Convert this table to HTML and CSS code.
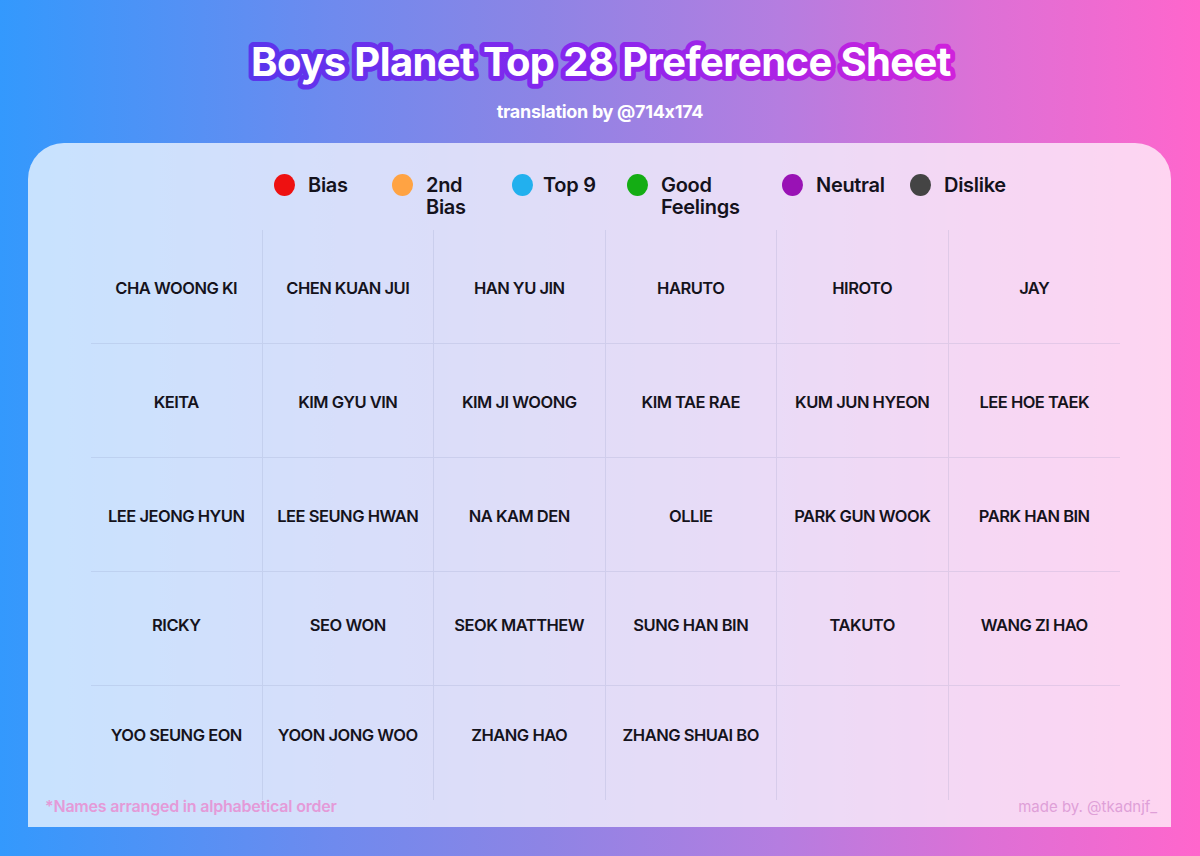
FILE: index.html
```html
<!DOCTYPE html>
<html lang="en">
<head>
<meta charset="utf-8">
<title>Boys Planet Top 28 Preference Sheet</title>
<link rel="stylesheet" href="styles.css">
</head>
<body>
<div class="page">
  <header class="header">
    <h1 class="title">
      <svg class="title-svg" width="1200" height="64" viewBox="0 0 1200 64" aria-label="Boys Planet Top 28 Preference Sheet">
        <defs>
          <linearGradient id="tg" x1="0" y1="0" x2="1" y2="0">
            <stop offset="0" stop-color="#5a35ec"/>
            <stop offset="0.5" stop-color="#8a25ee"/>
            <stop offset="1" stop-color="#cf22dc"/>
          </linearGradient>
        </defs>
        <text class="title-text" x="601" y="46" text-anchor="middle">Boys Planet Top 28 Preference Sheet</text>
      </svg>
    </h1>
    <p class="subtitle">translation by @714x174</p>
  </header>

  <main class="card">
    <ul class="legend">
      <li class="legend-item"><span class="dot dot-red"></span><span class="legend-label">Bias</span></li>
      <li class="legend-item"><span class="dot dot-orange"></span><span class="legend-label">2nd<br>Bias</span></li>
      <li class="legend-item"><span class="dot dot-blue"></span><span class="legend-label">Top 9</span></li>
      <li class="legend-item"><span class="dot dot-green"></span><span class="legend-label">Good<br>Feelings</span></li>
      <li class="legend-item"><span class="dot dot-purple"></span><span class="legend-label">Neutral</span></li>
      <li class="legend-item"><span class="dot dot-dark"></span><span class="legend-label">Dislike</span></li>
    </ul>

    <div class="grid">
      <div class="cell">CHA WOONG KI</div>
      <div class="cell">CHEN KUAN JUI</div>
      <div class="cell">HAN YU JIN</div>
      <div class="cell">HARUTO</div>
      <div class="cell">HIROTO</div>
      <div class="cell">JAY</div>

      <div class="cell">KEITA</div>
      <div class="cell">KIM GYU VIN</div>
      <div class="cell">KIM JI WOONG</div>
      <div class="cell">KIM TAE RAE</div>
      <div class="cell">KUM JUN HYEON</div>
      <div class="cell">LEE HOE TAEK</div>

      <div class="cell">LEE JEONG HYUN</div>
      <div class="cell">LEE SEUNG HWAN</div>
      <div class="cell">NA KAM DEN</div>
      <div class="cell">OLLIE</div>
      <div class="cell">PARK GUN WOOK</div>
      <div class="cell">PARK HAN BIN</div>

      <div class="cell">RICKY</div>
      <div class="cell">SEO WON</div>
      <div class="cell">SEOK MATTHEW</div>
      <div class="cell">SUNG HAN BIN</div>
      <div class="cell">TAKUTO</div>
      <div class="cell">WANG ZI HAO</div>

      <div class="cell">YOO SEUNG EON</div>
      <div class="cell">YOON JONG WOO</div>
      <div class="cell">ZHANG HAO</div>
      <div class="cell">ZHANG SHUAI BO</div>
      <div class="cell"></div>
      <div class="cell"></div>
    </div>

    <footer class="card-footer">
      <span class="note">*Names arranged in alphabetical order</span>
      <span class="credit">made by. @tkadnjf_</span>
    </footer>
  </main>
</div>
</body>
</html>
```

FILE: styles.css
```css
* { box-sizing: border-box; }

html, body {
  margin: 0;
  padding: 0;
}

body {
  width: 1200px;
  height: 856px;
  overflow: hidden;
  font-family: Inter, "Noto Sans", "Liberation Sans", sans-serif;
  background: linear-gradient(90deg, #3399fd 0%, #6f8aee 28%, #8d84e5 45%, #b57de0 65%, #dd70d6 82%, #ff66cc 100%);
}

.page {
  display: flex;
  flex-direction: column;
  height: 856px;
}

.header {
  display: flex;
  flex-direction: column;
  align-items: center;
  padding-top: 30px;
}

.title {
  margin: 0;
  height: 64px;
  line-height: 0;
}

.title-svg {
  display: block;
}

.title-text {
  font-family: Inter, "Noto Sans", "Liberation Sans", sans-serif;
  font-weight: 700;
  font-size: 40px;
  letter-spacing: -0.6px;
  fill: #ffffff;
  stroke: url(#tg);
  stroke-width: 10px;
  stroke-linejoin: round;
  paint-order: stroke fill;
}

.subtitle {
  margin: 7px 0 0;
  color: #ffffff;
  font-weight: 700;
  font-size: 18px;
  letter-spacing: -0.3px;
  line-height: 22px;
}

.card {
  margin: 20px 29px 0 28px;
  height: 684px;
  background: rgba(255, 255, 255, 0.72);
  border-radius: 36px 36px 0 0;
  display: flex;
  flex-direction: column;
  padding: 31px 0 0;
}

.legend {
  list-style: none;
  margin: 0 0 0 246px;
  padding: 0;
  display: grid;
  grid-template-columns: 118px 120px 115px 155px 128px auto;
  height: 56px;
}

.legend-item {
  display: flex;
  align-items: flex-start;
  gap: 13px;
}

.legend-item:nth-child(3) { gap: 10px; }

.dot {
  flex: none;
  width: 21px;
  height: 22px;
  border-radius: 50%;
  margin-top: 0;
}

.dot-red { background: #ee1111; }
.dot-orange { background: #ffa343; }
.dot-blue { background: #22b0ee; }
.dot-green { background: #14ad14; }
.dot-purple { background: #9912b5; }
.dot-dark { background: #444444; }

.legend-label {
  font-size: 20px;
  font-weight: 600;
  line-height: 22px;
  color: #14121c;
  letter-spacing: -0.3px;
}

.grid {
  margin: 0 51px 0 63px;
  display: grid;
  grid-template-columns: repeat(6, 1fr);
  grid-template-rows: repeat(5, 114px);
}

.cell {
  display: flex;
  align-items: center;
  justify-content: center;
  font-size: 16.5px;
  font-weight: 600;
  letter-spacing: -0.5px;
  color: #15131c;
  border-right: 1px solid rgba(120, 130, 175, 0.16);
  border-bottom: 1px solid rgba(120, 130, 175, 0.16);
  padding-top: 2px;
}

.cell:nth-child(n+19) { padding-top: 0; padding-bottom: 8px; }
.cell:nth-child(n+25) { padding-bottom: 16px; }
.cell:nth-child(6n) { border-right: none; }
.cell:nth-last-child(-n+6) { border-bottom: none; }

.card-footer {
  display: flex;
  justify-content: space-between;
  align-items: center;
  padding: 0 14px 0 17px;
  height: 14px;
  margin-top: -1px;
}

.note {
  color: #e49ad8;
  font-size: 16px;
  font-weight: 600;
  letter-spacing: -0.2px;
}

.credit {
  color: #dfa0d8;
  font-size: 15px;
  font-weight: 400;
}
```
